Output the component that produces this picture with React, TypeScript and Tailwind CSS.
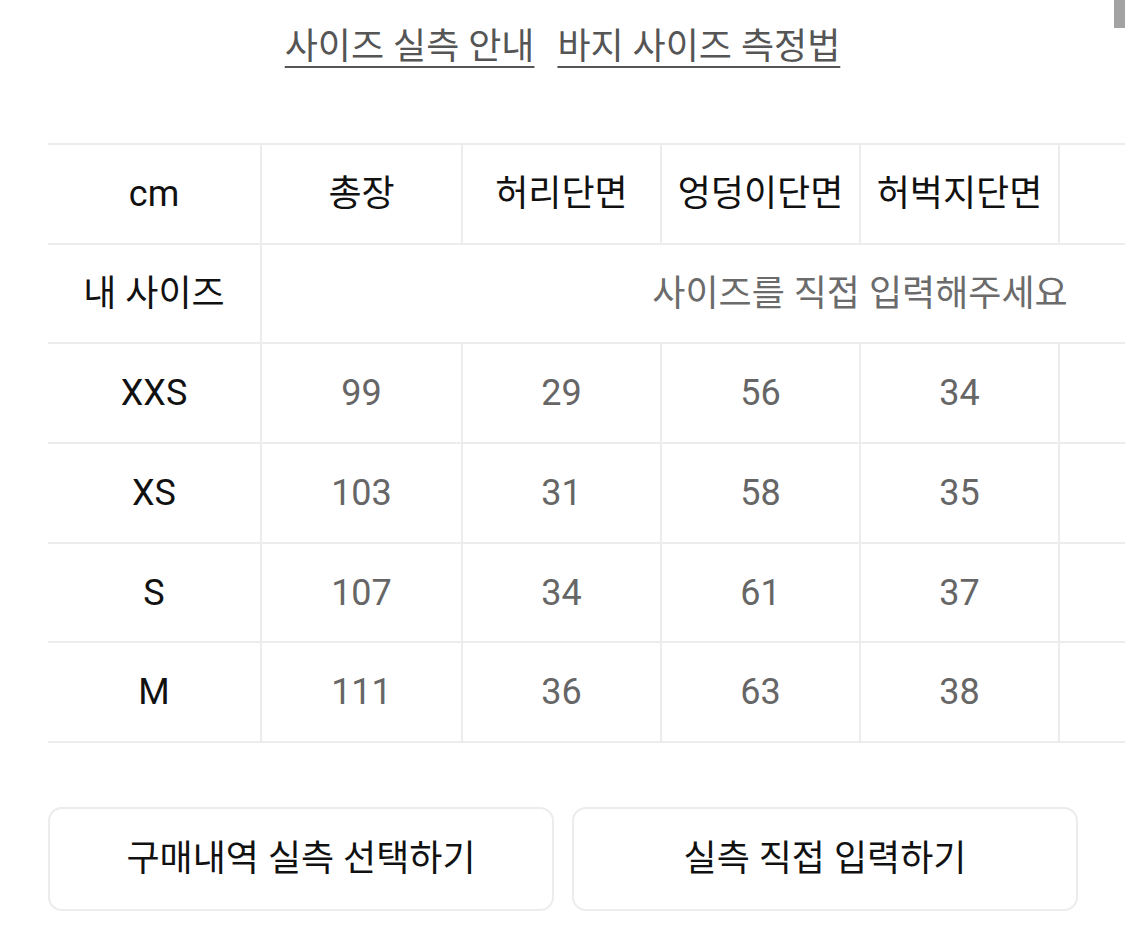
import React from "react";

const FONT = { fontFamily: 'Roboto, "Noto Sans CJK KR", sans-serif' };

const headers = ["총장", "허리단면", "엉덩이단면", "허벅지단면", "", ""];
const rows: [string, string[], string][] = [
  ["XXS", ["99", "29", "56", "34", "", ""], "h-[100px]"],
  ["XS", ["103", "31", "58", "35", "", ""], "h-[100px]"],
  ["S", ["107", "34", "61", "37", "", ""], "h-[99px]"],
  ["M", ["111", "36", "63", "38", "", ""], "h-[100px]"],
];

const colW = ["w-[201px]", "w-[199px]", "w-[199px]", "w-[199px]", "w-[199px]", "w-[199px]"];
const LINE = "border-[#ececec]";

export default function App() {
  return (
    <div className="relative w-[1125px] h-[927px] bg-white overflow-hidden" style={FONT}>
      <div className="absolute right-0 top-0 w-[11px] h-[28px] bg-[#a3a3a3]" />
      <div className="h-[94px] flex items-center justify-center gap-[23px] text-[36px] text-[#555] leading-none">
        <span className="underline decoration-[2px] underline-offset-[7px] decoration-[#555]">사이즈 실측 안내</span>
        <span className="underline decoration-[2px] underline-offset-[7px] decoration-[#555]">바지 사이즈 측정법</span>
      </div>
      <div className="mt-[49px] ml-[48px] overflow-hidden">
        <div className={`w-max border-t-2 ${LINE}`}>
          <div className={`flex h-[100px] border-b-2 ${LINE}`}>
            <div className={`w-[214px] shrink-0 border-r-2 ${LINE} flex items-center justify-center text-[36px] text-[#111]`}>cm</div>
            {headers.map((h, i) => (
              <div key={i} className={`${colW[i]} shrink-0 border-r-2 ${LINE} flex items-center justify-center text-[36px] text-[#111]`}>
                {h}
              </div>
            ))}
          </div>
          <div className={`flex h-[99px] border-b-2 ${LINE}`}>
            <div className={`w-[214px] shrink-0 border-r-2 ${LINE} flex items-center justify-center text-[36px] text-[#111]`}>내 사이즈</div>
            <div className="w-[1196px] shrink-0 flex items-center justify-center text-[36px] text-[#6b6b6b]">사이즈를 직접 입력해주세요</div>
          </div>
          {rows.map(([label, vals, h]) => (
            <div key={label} className={`flex ${h} border-b-2 ${LINE}`}>
              <div className={`w-[214px] shrink-0 border-r-2 ${LINE} flex items-center justify-center text-[36px] text-[#111]`}>{label}</div>
              {vals.map((v, i) => (
                <div key={i} className={`${colW[i]} shrink-0 border-r-2 ${LINE} flex items-center justify-center text-[36px] text-[#666]`}>
                  {v}
                </div>
              ))}
            </div>
          ))}
        </div>
      </div>
      <div className="mt-[64px] ml-[48px] mr-[47px] flex gap-[18px]">
        <button className="flex-1 h-[104px] border-2 border-[#ececec] rounded-[14px] flex items-center justify-center text-[36px] text-[#111]">
          구매내역 실측 선택하기
        </button>
        <button className="flex-1 h-[104px] border-2 border-[#ececec] rounded-[14px] flex items-center justify-center text-[36px] text-[#111]">
          실측 직접 입력하기
        </button>
      </div>
    </div>
  );
}
